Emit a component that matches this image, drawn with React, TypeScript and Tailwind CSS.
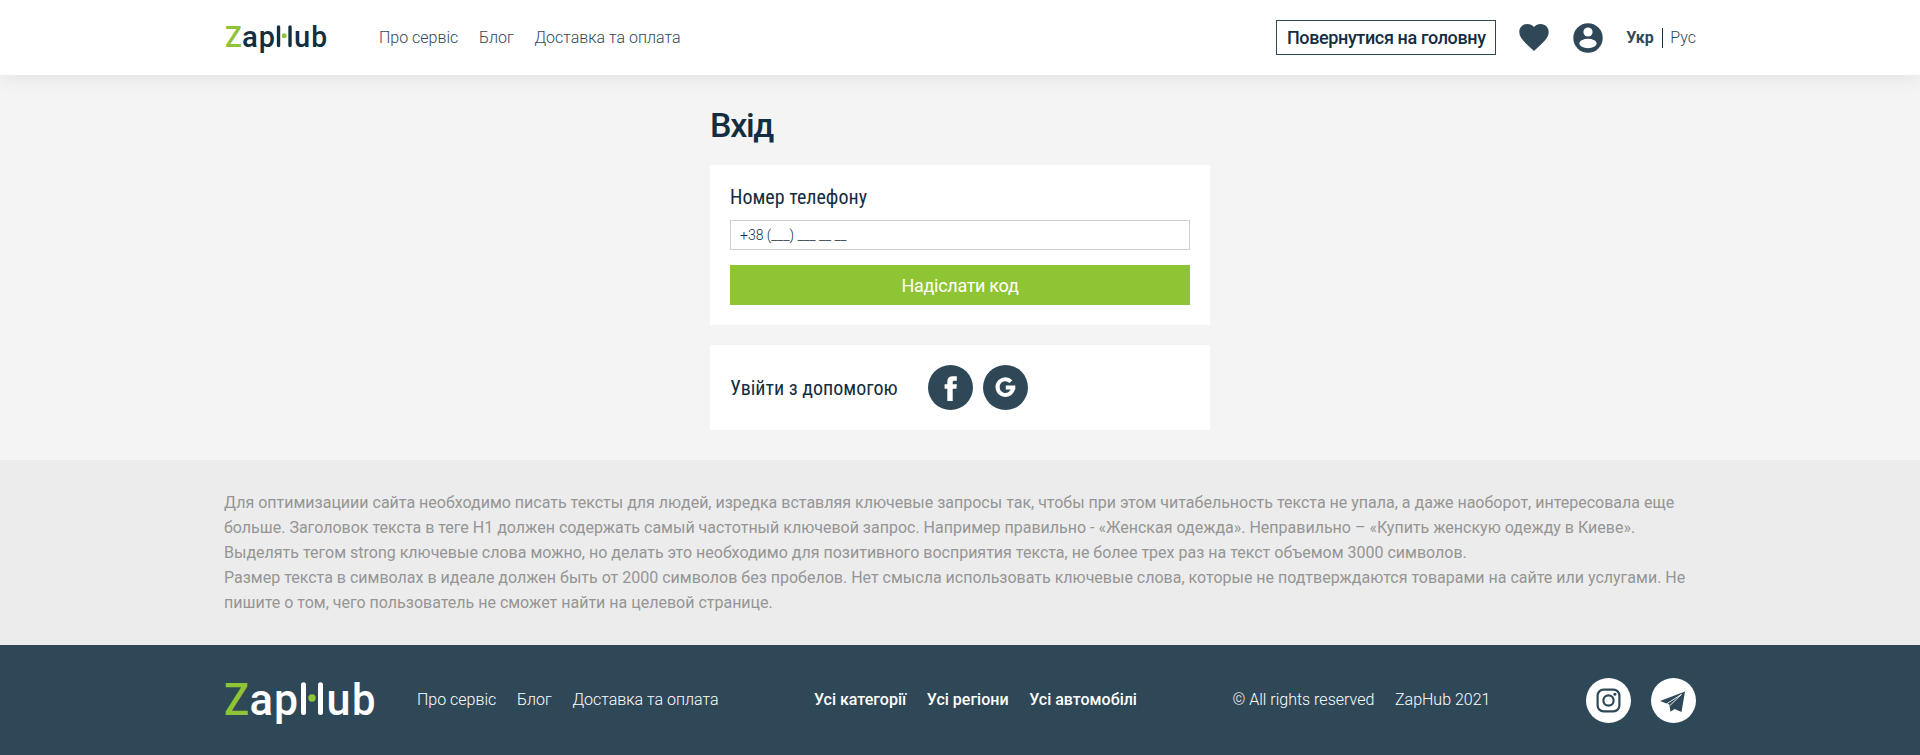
import React from "react";

function Logo({ light, className }: { light?: boolean; className: string }) {
  const ink = light ? "#ffffff" : "#142d3f";
  return (
    <svg viewBox="0 0 150 40" className={`overflow-visible ${className}`} aria-label="ZapHub">
      <g fontFamily="Roboto, sans-serif" fontSize="45" fontWeight="500" fill={ink}>
        <text x="0" y="33" fill="#8fc434" textLength="25" lengthAdjust="spacingAndGlyphs">Z</text>
        <text x="25.5" y="33" textLength="23.5" lengthAdjust="spacingAndGlyphs">a</text>
        <text x="50" y="33" textLength="24" lengthAdjust="spacingAndGlyphs">p</text>
        <text x="102.5" y="33" textLength="24" lengthAdjust="spacingAndGlyphs">u</text>
        <text x="128" y="33" textLength="23.5" lengthAdjust="spacingAndGlyphs">b</text>
      </g>
      <rect x="77" y="0.3" width="5" height="32.7" rx="2.5" fill={ink} />
      <rect x="94" y="0.3" width="5" height="32.7" rx="2.5" fill={ink} />
      <circle cx="88" cy="16" r="3.7" fill="#8fc434" />
    </svg>
  );
}

function Nav({ className }: { className: string }) {
  return (
    <nav className={`flex gap-[20.7px] font-light whitespace-nowrap ${className}`}>
      <a>Про сервіс</a>
      <a>Блог</a>
      <a>Доставка та оплата</a>
    </nav>
  );
}

export default function App() {
  return (
    <div className="h-[755px] overflow-hidden bg-[#f4f4f4] font-['Roboto',sans-serif] text-base text-[#142d3f] flex flex-col">
      <header className="relative h-[75px] shrink-0 bg-white px-56 flex items-center shadow-[0_0_20px_rgba(0,0,0,0.1)]">
        <Logo className="mt-0.5 w-[103px] h-[27px]" />
        <Nav className="ml-[52px] text-[#2f4858]" />
        <button className="ml-auto h-[35px] w-[220px] border border-[#2f4858] text-[18px] font-medium tracking-[-0.37px] whitespace-nowrap flex items-center justify-center">
          <span>Повернутися на головну</span>
        </button>
        <svg viewBox="2 3 20 18.35" className="ml-[23px] w-[30px] h-[27px]" fill="#2f4858">
          <path d="M12 21.35l-1.45-1.32C5.4 15.36 2 12.28 2 8.5 2 5.42 4.42 3 7.5 3c1.74 0 3.41.81 4.5 2.09C13.09 3.81 14.76 3 16.5 3 19.58 3 22 5.42 22 8.5c0 3.78-3.4 6.86-8.55 11.54L12 21.35z" />
        </svg>
        <svg viewBox="0 0 30 30" className="ml-[24px] w-[30px] h-[30px]">
          <circle cx="15" cy="15" r="14.7" fill="#2f4858" />
          <circle cx="15" cy="9" r="4.6" fill="#fff" />
          <ellipse cx="15" cy="20.5" rx="8.7" ry="4.7" fill="#fff" />
        </svg>
        <div className="ml-[23px] flex items-center text-[#2f4858]">
          <b className="w-[36px] font-bold">Укр</b>
          <i className="w-px h-5 bg-[#142d3f]" />
          <span className="ml-[7px] font-light">Рус</span>
        </div>
      </header>
      <main className="w-[500px] h-[385px] shrink-0 mx-auto">
        <h1 className="h-[90px] pt-[28px] text-[34px] leading-[44px] font-medium tracking-[-1.3px]">Вхід</h1>
        <section className="h-[160px] bg-white px-5 pt-5">
          <label className="block h-[35px] leading-6 text-[20px] font-['Roboto_Condensed','Roboto',sans-serif] [font-stretch:75%]">Номер телефону</label>
          <div className="h-[30px] border border-[#cfcfcf] px-[9px] text-sm leading-7 font-light">+38 (___) ___ __ __</div>
          <button className="mt-[15px] w-full h-10 bg-[#8fc434] text-white text-[18px] tracking-[-0.3px]">Надіслати код</button>
        </section>
        <section className="mt-5 h-[85px] bg-white px-5 flex items-center">
          <span className="w-[198px] whitespace-nowrap text-[20px] font-['Roboto_Condensed','Roboto',sans-serif] [font-stretch:75%]">Увійти з допомогою</span>
          <svg viewBox="0 0 45 45" className="w-[45px] h-[45px]">
            <circle cx="22.5" cy="22.5" r="22.5" fill="#2f4858" />
            <path fill="#fff" d="M19.3 36V23.8H16.6V19.2H19.3V16.6C19.3 13 21.2 11.2 24.8 11.2H28.8V15.7H26.4C25.1 15.7 24.7 16.2 24.7 17.3V19.2H28.9L28.4 23.8H24.7V36Z" />
          </svg>
          <svg viewBox="0 0 45 45" className="ml-[10px] w-[45px] h-[45px]">
            <circle cx="22.5" cy="22.5" r="22.5" fill="#2f4858" />
            <path fill="none" stroke="#fff" strokeWidth="4" d="M27.9 16.7A7.8 7.8 0 1 0 30.1 22.5M32.3 22.5H22.8M30.1 22.5V23.6" />
          </svg>
        </section>
      </main>
      <section className="h-[185px] shrink-0 bg-[#ececec] px-56 pt-[30px] text-[#959595] leading-[25px]">
        <p className="whitespace-nowrap">
          Для оптимизациии сайта необходимо писать тексты для людей, изредка вставляя ключевые запросы так, чтобы при этом читабельность текста не упала, а даже наоборот, интересовала еще<br />
          больше. Заголовок текста в теге H1 должен содержать самый частотный ключевой запрос. Например правильно - «Женская одежда». Неправильно – «Купить женскую одежду в Киеве».<br />
          Выделять тегом strong ключевые слова можно, но делать это необходимо для позитивного восприятия текста, не более трех раз на текст объемом 3000 символов.<br />
          Размер текста в символах в идеале должен быть от 2000 символов без пробелов. Нет смысла использовать ключевые слова, которые не подтверждаются товарами на сайте или услугами. Не<br />
          пишите о том, чего пользователь не сможет найти на целевой странице.
        </p>
      </section>
      <footer className="h-[110px] shrink-0 bg-[#2f4858] px-56 text-white flex items-center justify-between">
        <div className="flex items-center">
          <Logo light className="mt-[3px] w-[150px] h-[40px]" />
          <Nav className="ml-[43px]" />
        </div>
        <nav className="flex gap-[20.7px] font-medium">
          <a>Усі категорії</a>
          <a>Усі регіони</a>
          <a>Усі автомобілі</a>
        </nav>
        <div className="flex gap-[20.7px] font-light">
          <span>© All rights reserved</span>
          <span>ZapHub 2021</span>
        </div>
        <div className="flex gap-5">
          <svg viewBox="0 0 45 45" className="w-[45px] h-[45px]">
            <circle cx="22.5" cy="22.5" r="22.5" fill="#fff" />
            <g fill="none" stroke="#2f4858" strokeWidth="2.2">
              <rect x="11.6" y="11.6" width="21.8" height="21.8" rx="6" />
              <circle cx="22.5" cy="22.5" r="5.1" />
            </g>
            <circle cx="28.9" cy="16.2" r="1.5" fill="#2f4858" />
          </svg>
          <svg viewBox="0 0 45 45" className="w-[45px] h-[45px]">
            <circle cx="22.5" cy="22.5" r="22.5" fill="#fff" />
            <path fill="#2f4858" d="M9 23L34 13.4L30.5 34L23.6 31L19.5 33.8L18.3 26.5Z" />
            <path fill="none" stroke="#fff" strokeWidth="0.9" d="M15.5 25.9L30.5 16.4L18.9 27.5" />
          </svg>
        </div>
      </footer>
    </div>
  );
}
